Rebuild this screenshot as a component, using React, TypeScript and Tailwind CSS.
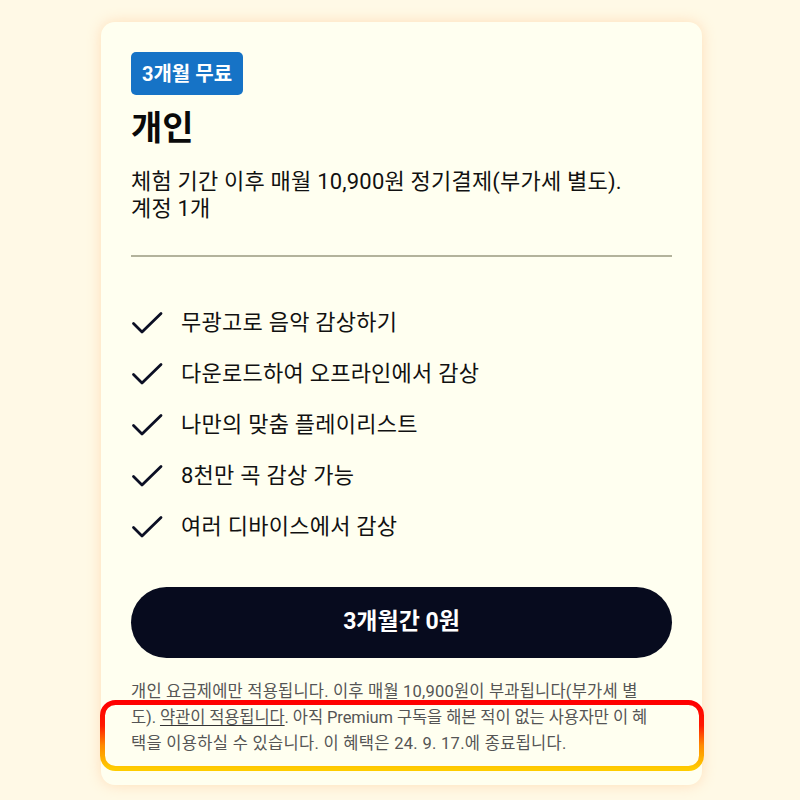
import React from "react";

const features = [
  "무광고로 음악 감상하기",
  "다운로드하여 오프라인에서 감상",
  "나만의 맞춤 플레이리스트",
  "8천만 곡 감상 가능",
  "여러 디바이스에서 감상",
];

function Check() {
  return (
    <svg width="32" height="24" viewBox="0 0 32 24" fill="none" className="shrink-0">
      <path d="M2.5 12.5 L11 21 L30 2.5" stroke="#0b0f24" strokeWidth="2.8" strokeLinecap="round" strokeLinejoin="round" />
    </svg>
  );
}

function Highlight() {
  return (
    <svg
      className="absolute left-[-1px] top-[678px] pointer-events-none"
      width="604"
      height="71"
      viewBox="0 0 604 71"
      fill="none"
    >
      <defs>
        <linearGradient id="hl" x1="0" y1="0" x2="0" y2="1">
          <stop offset="0" stopColor="#ff0000" />
          <stop offset="0.35" stopColor="#ff1a00" />
          <stop offset="0.65" stopColor="#ff8a00" />
          <stop offset="1" stopColor="#ffcc00" />
        </linearGradient>
      </defs>
      <rect x="2.5" y="2.5" width="599" height="66" rx="13" stroke="url(#hl)" strokeWidth="5" />
    </svg>
  );
}

export default function App() {
  return (
    <div
      className="min-h-[800px] w-full bg-[#fff9e6] pt-[22px] pb-[15px]"
      style={{ fontFamily: 'Roboto, "Noto Sans CJK KR", "Noto Sans", sans-serif' }}
    >
      <div className="relative ml-[101px] w-[601px] rounded-[14px] bg-[#fffff0] px-[30px] pt-[30px] pb-[28px] shadow-[0_0_14px_rgba(255,190,130,0.45)]">
        <div className="inline-flex h-[43px] items-center rounded-[5px] bg-[#1673c6] px-[11px] text-[20px] font-bold text-white">
          3개월 무료
        </div>
        <h1 className="mt-[13px] text-[34px] font-bold leading-[40px] text-[#0a0a0a]">개인</h1>
        <div className="mt-[20px] text-[22px] leading-[27px] tracking-[0.2px] text-[#111111]">
          <p>체험 기간 이후 매월 10,900원 정기결제(부가세 별도).</p>
          <p>계정 1개</p>
        </div>
        <div className="mt-[33px] h-[2px] bg-[#b3b39c]" />
        <ul className="mt-[40px]">
          {features.map((f) => (
            <li key={f} className="flex h-[51px] items-center gap-[18px] text-[22px] tracking-[0.25px] text-[#111111]">
              <Check />
              <span>{f}</span>
            </li>
          ))}
        </ul>
        <button className="mt-[35px] flex h-[71px] w-full items-center justify-center rounded-full bg-[#070b1e] text-[23px] font-bold text-white">
          3개월간 0원
        </button>
        <div className="mt-[21px] text-[16.5px] leading-[26px] tracking-[0.2px] text-[#555555]">
          <p className="whitespace-nowrap">개인 요금제에만 적용됩니다. 이후 매월 10,900원이 부과됩니다(부가세 별</p>
          <p className="whitespace-nowrap tracking-[-0.1px]">
            도). <span className="underline decoration-[#333] underline-offset-2">약관이 적용됩니다</span>. 아직 Premium 구독을 해본 적이 없는 사용자만 이 혜
          </p>
          <p className="whitespace-nowrap tracking-[0.3px]">택을 이용하실 수 있습니다. 이 혜택은 24. 9. 17.에 종료됩니다.</p>
        </div>
        <Highlight />
      </div>
    </div>
  );
}
